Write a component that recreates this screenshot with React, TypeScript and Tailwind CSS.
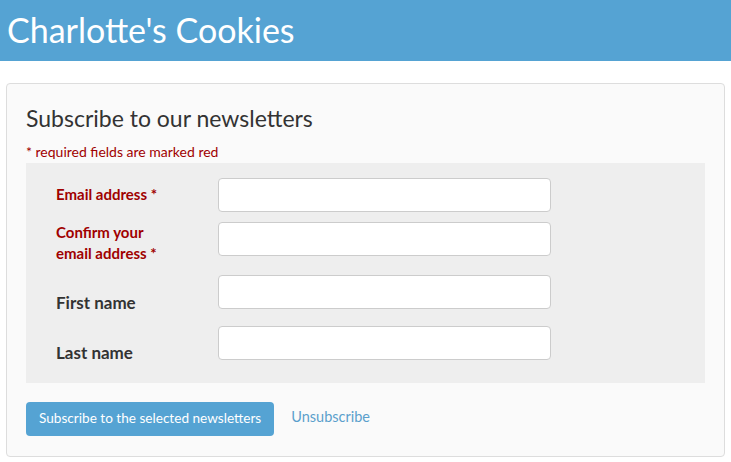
export default function App() {
  const font = { fontFamily: "Lato, 'Liberation Sans', sans-serif" };
  return (
    <div className="min-h-[462px] bg-white font-['Lato',_'Liberation_Sans',_sans-serif]" style={font}>
      <header className="h-[61px] bg-[#55a3d3] px-[7px] flex items-center">
        <h1 className="text-[34px] leading-none text-white pb-[2px]">Charlotte's Cookies</h1>
      </header>

      <main className="pt-[22px] pl-[6px] pr-[6px]">
        <section className="border border-[#dddddd] rounded-[4px] bg-[#fafafa] px-[19px] pt-[19px] pb-[20px]">
          <h2 className="text-[23px] leading-[30px] text-[#333333]">Subscribe to our newsletters</h2>
          <p className="mt-[9px] text-[14px] leading-[20px] text-[#a00000]">* required fields are marked red</p>

          <form className="mt-[1px]">
            <div className="bg-[#eeeeee] pl-[30px] pt-[15px] pb-[18px]">
              <div className="flex items-start">
                <label className="w-[162px] pt-[6px] text-[15px] leading-[21px] font-bold text-[#a00000]">Email address *</label>
                <input className="w-[333px] h-[34px] bg-white border border-[#cccccc] rounded-[4px]" />
              </div>
              <div className="flex items-start mt-[10px]">
                <label className="w-[162px] text-[15px] leading-[21px] font-bold text-[#a00000]">
                  Confirm your
                  <br />
                  email address *
                </label>
                <input className="w-[333px] h-[34px] bg-white border border-[#cccccc] rounded-[4px]" />
              </div>
              <div className="flex items-start mt-[11px]">
                <label className="w-[162px] pt-[16px] text-[17px] leading-[24px] font-bold text-[#333333]">First name</label>
                <input className="w-[333px] h-[34px] bg-white border border-[#cccccc] rounded-[4px]" />
              </div>
              <div className="flex items-start mt-[11px]">
                <label className="w-[162px] pt-[15px] text-[17px] leading-[24px] font-bold text-[#333333]">Last name</label>
                <input className="w-[333px] h-[34px] bg-white border border-[#cccccc] rounded-[4px]" />
              </div>
            </div>

            <div className="flex items-center mt-[19px]">
              <button type="button" className="h-[34px] px-[13px] rounded-[4px] bg-[#55a3d3] text-white text-[13.6px] leading-none">
                Subscribe to the selected newsletters
              </button>
              <a className="ml-[17px] text-[14.5px] text-[#5aa0cc] -mt-[4px]">Unsubscribe</a>
            </div>
          </form>
        </section>
      </main>
    </div>
  );
}
